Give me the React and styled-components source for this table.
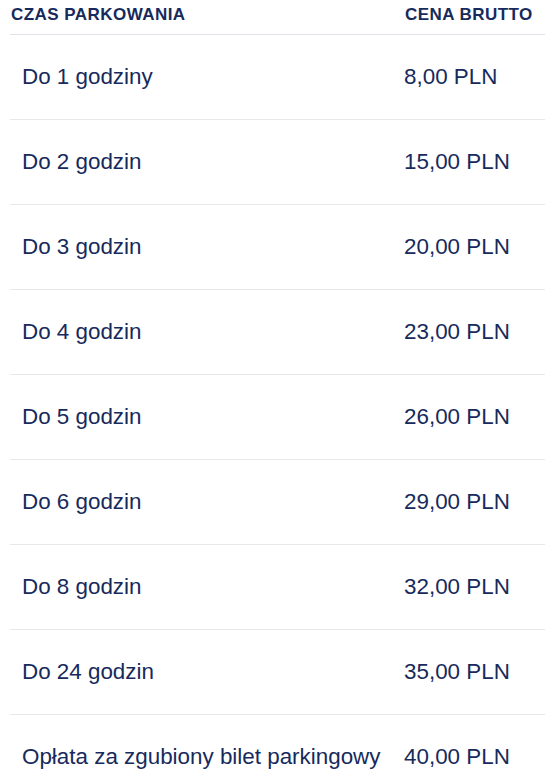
import styled, { createGlobalStyle } from 'styled-components';

const GlobalStyle = createGlobalStyle`
  body {
    margin: 0;
    background: #ffffff;
    font-family: 'Liberation Sans', Arial, sans-serif;
  }
`;

const Wrapper = styled.div`
  padding: 0 13px 0 10px;
`;

const Table = styled.div`
  display: grid;
  grid-template-columns: 394px 1fr;
  color: #172a5c;
`;

const HeadCell = styled.div`
  height: 35px;
  box-sizing: border-box;
  display: flex;
  align-items: center;
  padding: 0 0 4px 1px;
  border-bottom: 1px solid #e1e1ec;
  font-size: 17px;
  font-weight: 700;
  letter-spacing: 0.45px;
  text-transform: uppercase;
`;

const Cell = styled.div`
  height: 85px;
  box-sizing: border-box;
  display: flex;
  align-items: center;
  padding-left: ${(p) => (p.$first ? '12px' : '0')};
  border-bottom: 1px solid #e8e8e8;
  font-size: 22.4px;
  white-space: nowrap;
`;

const rows = [
  ['Do 1 godziny', '8,00 PLN'],
  ['Do 2 godzin', '15,00 PLN'],
  ['Do 3 godzin', '20,00 PLN'],
  ['Do 4 godzin', '23,00 PLN'],
  ['Do 5 godzin', '26,00 PLN'],
  ['Do 6 godzin', '29,00 PLN'],
  ['Do 8 godzin', '32,00 PLN'],
  ['Do 24 godzin', '35,00 PLN'],
  ['Opłata za zgubiony bilet parkingowy', '40,00 PLN'],
];

const App = () => {
  return (
    <Wrapper>
      <GlobalStyle />
      <Table>
        <HeadCell>Czas parkowania</HeadCell>
        <HeadCell>Cena brutto</HeadCell>
        {rows.map(([time, price]) => [
          <Cell key={time} $first>{time}</Cell>,
          <Cell key={time + '-p'}>{price}</Cell>,
        ])}
      </Table>
    </Wrapper>
  );
};

export default App;
